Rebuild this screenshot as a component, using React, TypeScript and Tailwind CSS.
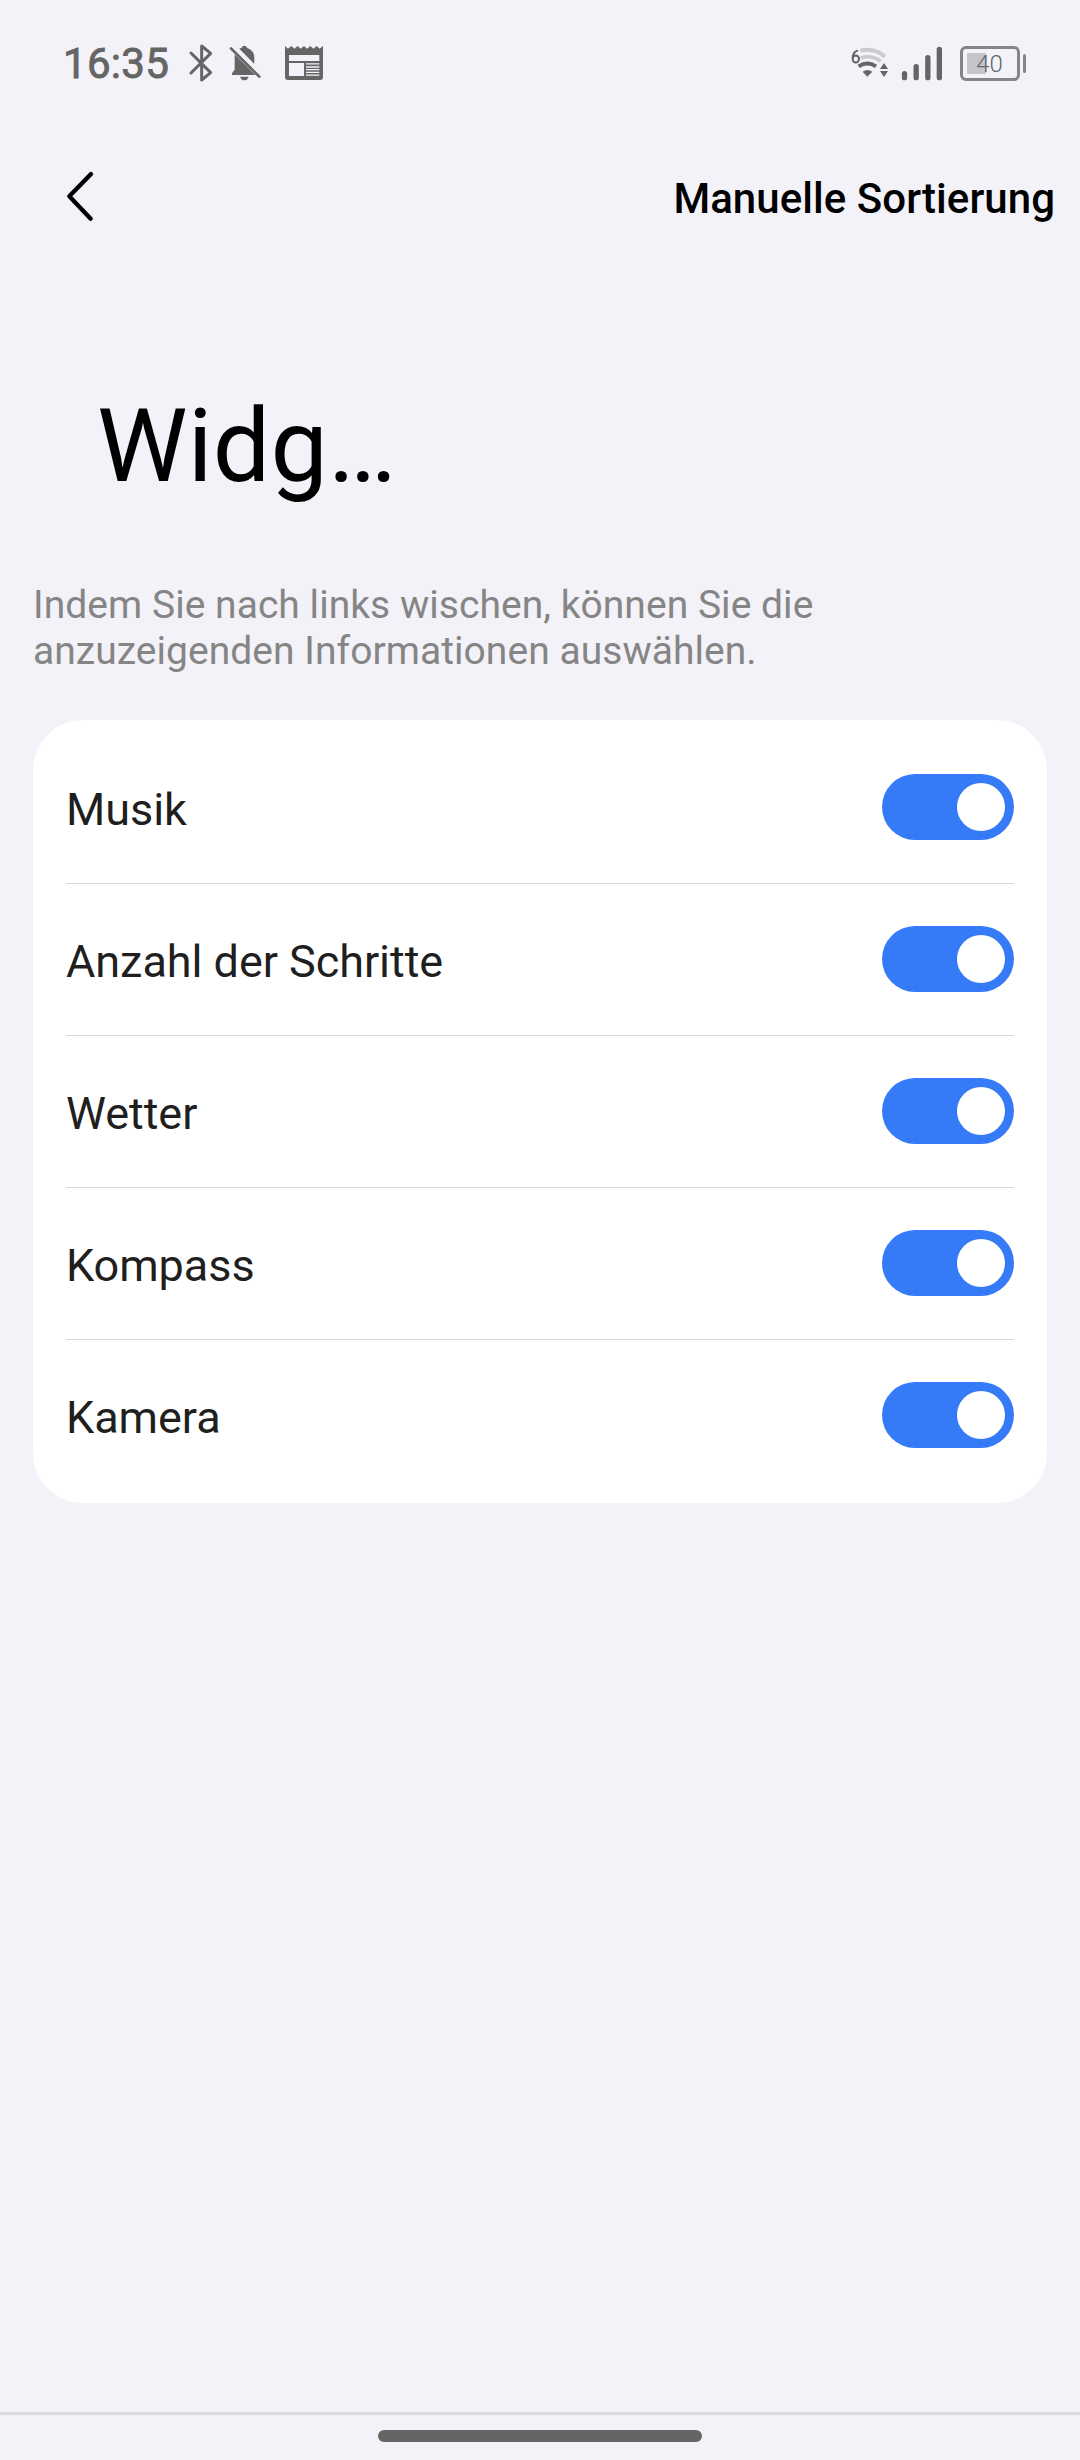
const INK = "#656565";

function BluetoothIcon() {
  return (
    <svg className="h-[42px] w-[26px] shrink-0" viewBox="414 36 78 126" fill="none">
      <path
        d="M423 69 L482 128 L455 150 V48 L482 70 L423 129"
        stroke={INK}
        strokeWidth="9"
        strokeLinecap="round"
        strokeLinejoin="round"
      />
    </svg>
  );
}

function BellOffIcon() {
  return (
    <svg className="h-[42px] w-[32px] shrink-0" viewBox="538 36 96 126" fill={INK}>
      <path d="M569 56 Q573 54 576 53 Q578 47 584 47 Q590 47 592 53 Q614 61 614 84 V102 Z" />
      <path d="M555 73 L617 135 H547 V130 L555 119 Z" />
      <path d="M571 140 H597 Q593 151 584 151 Q575 151 571 140 Z" />
      <path d="M544 55 L629 140" stroke={INK} strokeWidth="8" strokeLinecap="round" />
    </svg>
  );
}

function NewsIcon() {
  return (
    <svg className="h-[42px] w-[38px] shrink-0" viewBox="705 36 114 126">
      <path
        d="M705 48 L714 56 L724 48 L733 56 L743 48 L752 56 L762 48 L771 56 L781 48 L790 56 L800 48 L809 56 L819 48 V141 Q819 150 810 150 H714 Q705 150 705 141 Z"
        fill={INK}
      />
      <path d="M717 75 H808 V93 H717 Z M717 99 H762 V138 H717 Z" fill="#f3f2f9" />
      <path d="M768 101.500 H808 M768 111 H808 M768 119 H808 M768 127 H808 M768 135.500 H808" stroke="#f3f2f9" strokeWidth="4" />
    </svg>
  );
}

function WifiIcon() {
  return (
    <svg className="h-[42px] w-[38px] shrink-0" viewBox="62 36 114 126" fill="none">
      <path d="M90 62 Q131 52 164 80" stroke="#cbcad0" strokeWidth="12" />
      <path d="M91 84 Q125 73 151 94" stroke="#cbcad0" strokeWidth="11" />
      <path d="M85 109 Q111 92 137 109" stroke={INK} strokeWidth="12" />
      <path d="M97 125 Q111 115 126 125 L111 140 Z" fill={INK} />
      <path d="M83 61 Q67 66 67 84" stroke={INK} strokeWidth="6" />
      <ellipse cx="76.500" cy="87" rx="9.500" ry="10.500" stroke={INK} strokeWidth="6" />
      <path d="M149 117 L161 99 L173 117 Z M149 123 H173 L161 141 Z" fill={INK} />
    </svg>
  );
}

function SignalIcon() {
  return (
    <svg className="h-[42px] w-[42px] shrink-0" viewBox="213 36 126 126" stroke={INK} strokeWidth="16" strokeLinecap="round">
      <path d="M223.500 131 V143 M258.500 110 V143 M293.500 83 V143 M328 58 V143" />
    </svg>
  );
}

function Battery() {
  return (
    <div className="flex items-center">
      <div className="relative h-[35px] w-[60px] rounded-[6px] border-[3px] border-[#858587]">
        <div className="absolute left-[4px] top-[4px] h-[21px] w-[19px] rounded-[1px] bg-[#c5c4ca]" />
        <div className="absolute inset-0 flex items-center justify-center pr-px pt-px text-[24px] font-light leading-none text-[#656565]">
          40
        </div>
      </div>
      <div className="ml-[3px] h-[19px] w-[3px] rounded-full bg-[#858587]" />
    </div>
  );
}

function StatusBar() {
  return (
    <div className="flex h-[126px] items-start justify-between pl-[63px] pr-[54px] pt-[42px]">
      <div className="flex h-[42px] items-center text-[#656565]">
        <span className="w-[125px] pt-[2px] text-[42px] leading-none tracking-[0.3px] [-webkit-text-stroke:0.9px_#656565]">
          16:35
        </span>
        <BluetoothIcon />
        <div className="w-[15px]" />
        <BellOffIcon />
        <div className="w-[24px]" />
        <NewsIcon />
      </div>
      <div className="flex h-[42px] items-center">
        <WifiIcon />
        <div className="w-[12px]" />
        <SignalIcon />
        <div className="w-[17px]" />
        <Battery />
      </div>
    </div>
  );
}

function Toggle() {
  return (
    <button
      type="button"
      role="switch"
      aria-checked="true"
      className="mb-px flex h-[66px] w-[132px] items-center justify-end rounded-full bg-[#357af6] pr-[9px]"
    >
      <span className="size-12 rounded-full bg-white" />
    </button>
  );
}

const widgets = ["Musik", "Anzahl der Schritte", "Wetter", "Kompass", "Kamera"];

export default function App() {
  return (
    <div className="flex h-[2460px] w-[1080px] flex-col overflow-hidden bg-[#f3f2f9] font-['Roboto',sans-serif] text-black">
      <StatusBar />
      <header className="flex h-[144px] items-center justify-between pl-[60px] pr-[25px]">
        <svg className="h-[60px] w-[40px]" viewBox="60 54 120 180" fill="none">
          <path d="M153 72 L88 139 L152 206" stroke="#000" strokeWidth="13" strokeLinecap="round" strokeLinejoin="round" />
        </svg>
        <span className="pt-[2px] text-[42px] font-medium leading-[50px] tracking-[0.05px]">Manuelle Sortierung</span>
      </header>
      <h1 className="mt-[116px] pl-[97px] text-[102px] leading-[120px] tracking-[0.2px]">Widg…</h1>
      <p className="mt-[76px] w-[860px] pl-[33px] text-[39px] leading-[46px] tracking-[0.04px] text-[#858585]">
        Indem Sie nach links wischen, können Sie die anzuzeigenden Informationen auswählen.
      </p>
      <ul className="mx-[33px] mt-[46px] h-[783px] rounded-[50px] bg-white px-[33px] pt-[12px]">
        {widgets.map((name) => (
          <li key={name} className="flex h-[152px] items-center justify-between border-b border-[#d9d9d9] last:border-transparent">
            <span className="pt-[4px] text-[45px] leading-[54px] tracking-[-0.05px] text-[#1f1f1f]">{name}</span>
            <Toggle />
          </li>
        ))}
      </ul>
      <footer className="mt-auto flex h-[48px] justify-center border-t-[3px] border-[#dad9e0] pt-[15px]">
        <div className="h-[12px] w-[324px] rounded-full bg-[#656565]" />
      </footer>
    </div>
  );
}
